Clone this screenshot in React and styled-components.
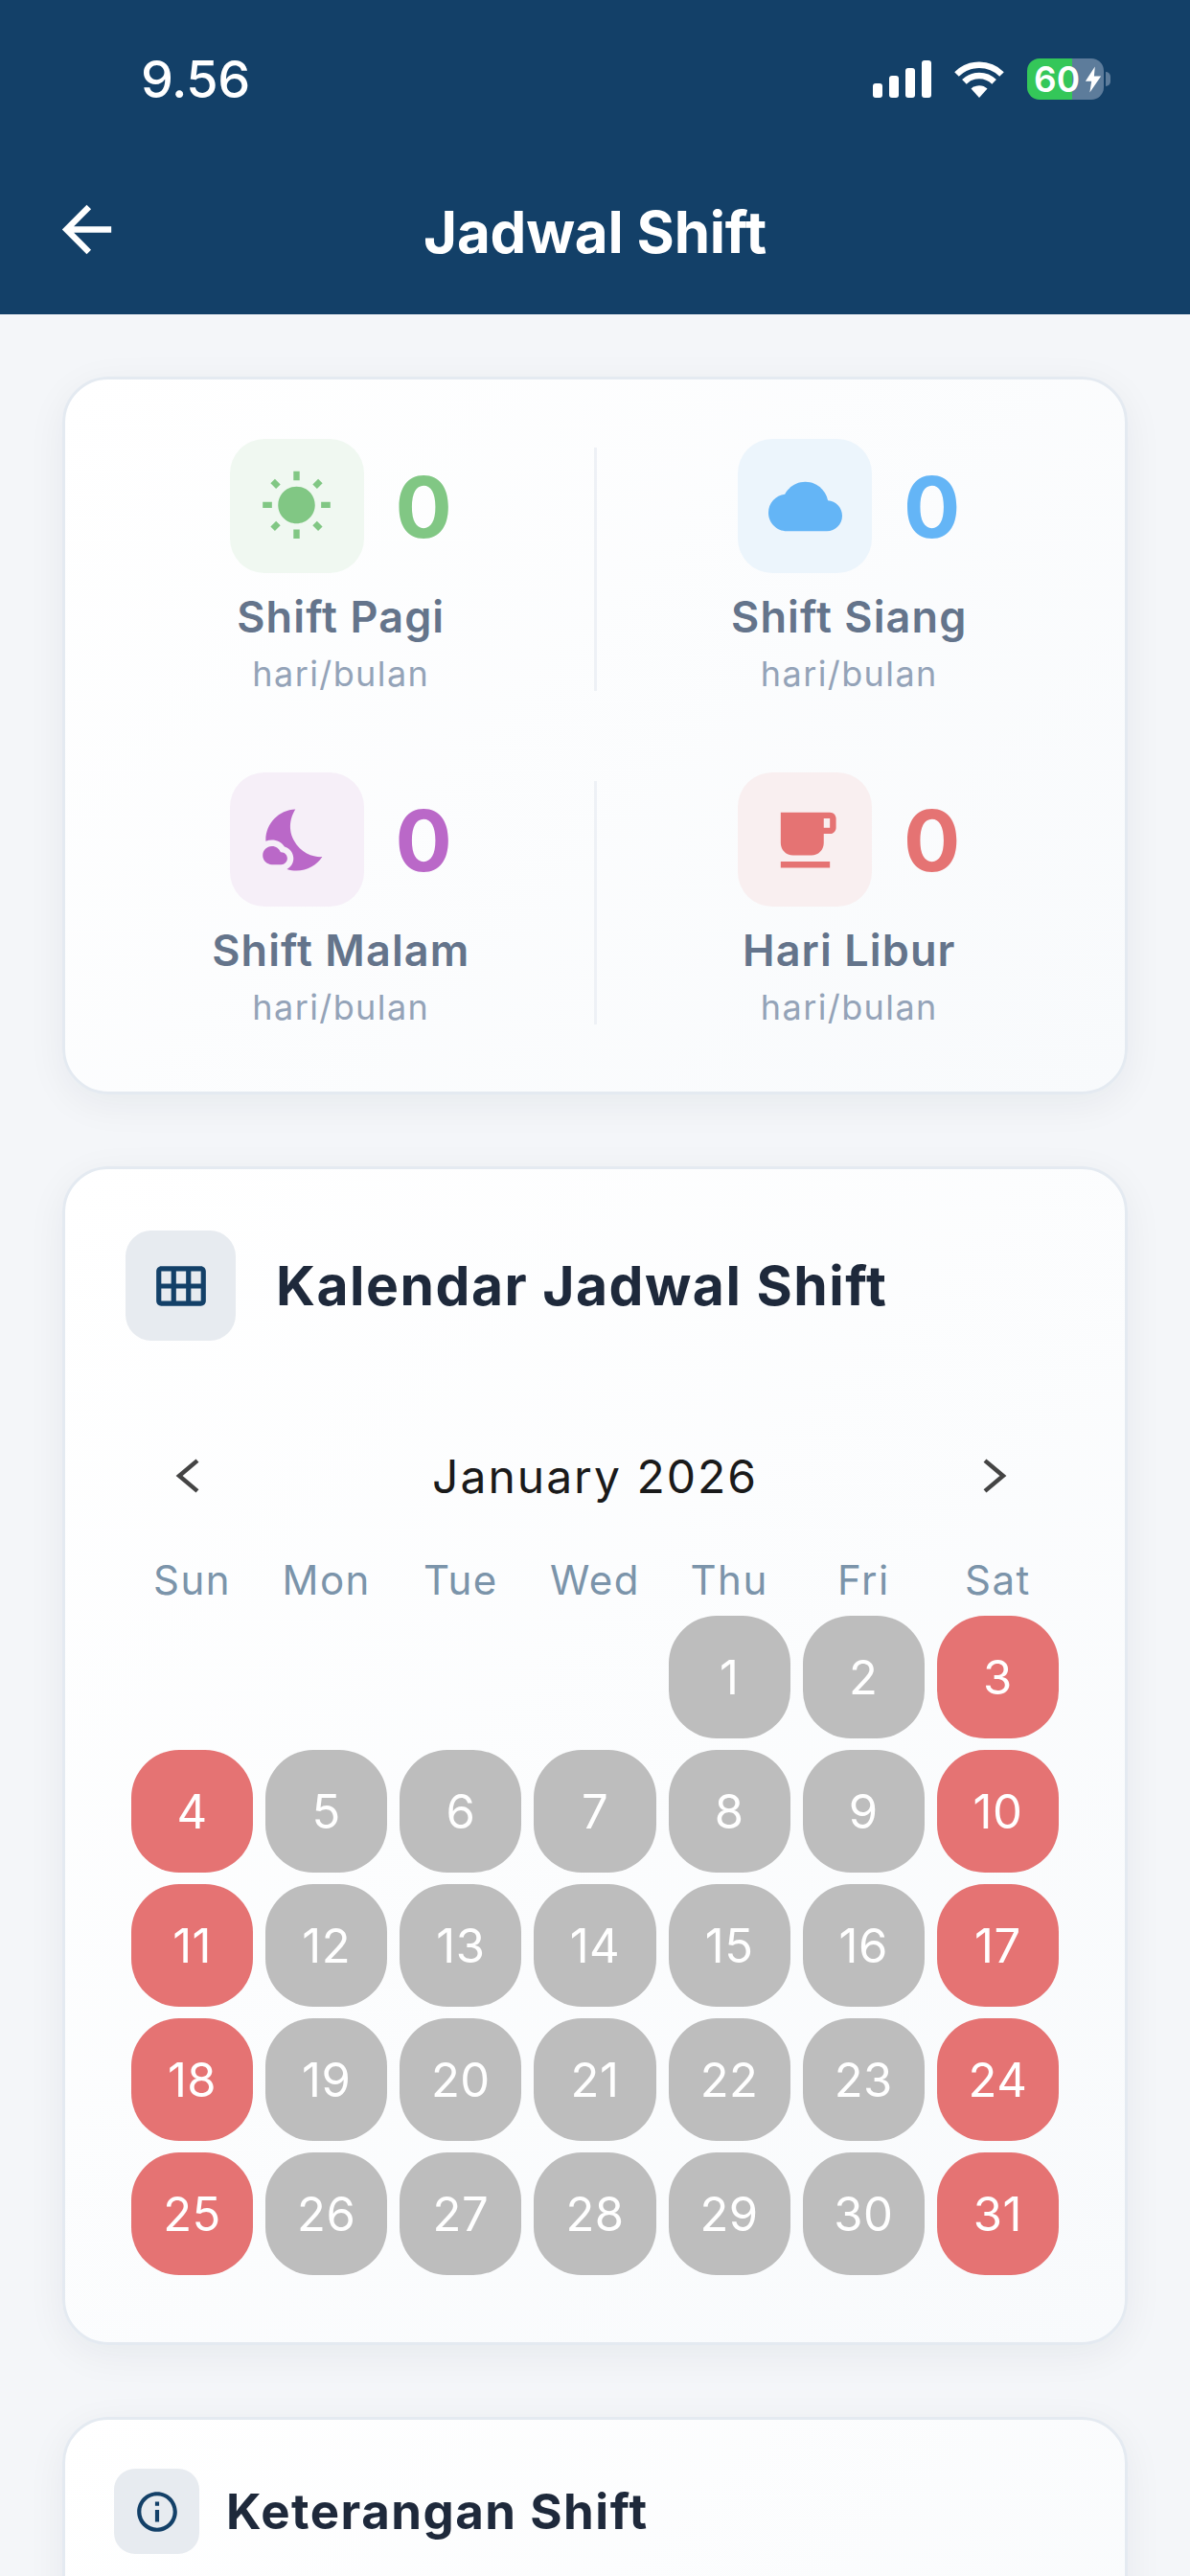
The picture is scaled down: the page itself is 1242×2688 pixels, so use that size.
import React from 'react';
import styled, { createGlobalStyle } from 'styled-components';

const GlobalStyle = createGlobalStyle`
  html, body {
    margin: 0;
    padding: 0;
    background: #f4f6f9;
    font-family: 'Inter', 'Liberation Sans', sans-serif;
  }
  * { box-sizing: border-box; }
`;

const NAVY = '#134068';

const ICONS = {
  back: 'M20 11H7.83l5.59-5.59L12 4l-8 8 8 8 1.41-1.41L7.83 13H20v-2z',
  sun: 'M6.76 4.84l-1.8-1.79-1.41 1.41 1.79 1.79 1.42-1.41zM4 10.5H1v2h3v-2zm9-9.95h-2V3.5h2V.55zm7.45 3.91l-1.41-1.41-1.79 1.79 1.41 1.41 1.79-1.79zm-3.21 13.7l1.79 1.8 1.41-1.41-1.8-1.79-1.4 1.4zM20 10.5v2h3v-2h-3zm-8-5c-3.31 0-6 2.69-6 6s2.69 6 6 6 6-2.69 6-6-2.69-6-6-6zm-1 16.95h2V19.5h-2v2.95zm-7.45-3.91l1.41 1.41 1.79-1.8-1.41-1.41-1.79 1.8z',
  cloud: 'M19.35 10.04C18.67 6.59 15.64 4 12 4 9.11 4 6.6 5.64 5.35 8.04 2.34 8.36 0 10.91 0 14c0 3.31 2.69 6 6 6h13c2.76 0 5-2.24 5-5 0-2.64-2.05-4.78-4.65-4.96z',
  moon: 'M11.1 12.08c-2.33-4.51-.5-8.48.53-10.07C6.27 2.2 1.98 6.59 1.98 12c0 .14.02.28.02.42.62-.27 1.29-.42 2-.42 1.66 0 3.18.83 4.1 2.15 1.67.48 2.9 2.02 2.9 3.85 0 1.52-.87 2.83-2.12 3.51.98.32 2.03.5 3.11.5 3.5 0 6.58-1.8 8.37-4.52-2.36.23-6.98-.97-9.26-5.41zM7 16h-.18C6.4 14.84 5.3 14 4 14c-1.66 0-3 1.34-3 3s1.34 3 3 3h3c1.1 0 2-.9 2-2s-.9-2-2-2z',
  cup: 'M20 3H4v10c0 2.21 1.79 4 4 4h6c2.21 0 4-1.79 4-4v-3h2c1.11 0 2-.9 2-2V5c0-1.11-.89-2-2-2zm0 5h-2V5h2v3zM4 19h16v2H4z',
  calendar: 'M20 4H4c-1.1 0-2 .9-2 2v12c0 1.1.9 2 2 2h16c1.1 0 2-.9 2-2V6c0-1.1-.9-2-2-2zM8 11H4V6h4v5zm6 0h-4V6h4v5zm6 0h-4V6h4v5zM8 18H4v-5h4v5zm6 0h-4v-5h4v5zm6 0h-4v-5h4v5z',
  info: 'M11 7h2v2h-2zm0 4h2v6h-2zm1-9C6.48 2 2 6.48 2 12s4.48 10 10 10 10-4.48 10-10S17.52 2 12 2zm0 18c-4.41 0-8-3.59-8-8s3.59-8 8-8 8 3.59 8 8-3.59 8-8 8z',
};

const Icon = ({ name, size, color }) => (
  <svg width={size} height={size} viewBox="0 0 24 24" fill={color} style={{ display: 'block' }}>
    <path d={ICONS[name]} />
  </svg>
);

const Chevron = ({ points }) => (
  <svg width="72" height="72" viewBox="0 0 24 24" fill="none" stroke="#444" strokeWidth="1.5">
    <polyline points={points} />
  </svg>
);

const STATS = [
  { icon: 'sun', label: 'Shift Pagi', color: '#81c784', tint: '#f0f8f1' },
  { icon: 'cloud', label: 'Shift Siang', color: '#64b5f6', tint: '#ecf5fc' },
  { icon: 'moon', label: 'Shift Malam', color: '#ba68c8', tint: '#f6eff8' },
  { icon: 'cup', label: 'Hari Libur', color: '#e57373', tint: '#f9eff0' },
];

const WEEKDAYS = ['Sun', 'Mon', 'Tue', 'Wed', 'Thu', 'Fri', 'Sat'];
const FIRST_WEEKDAY = 4;
const DAYS = Array.from({ length: 31 }, (_, i) => i + 1);

const isWeekend = (day) => {
  const column = (FIRST_WEEKDAY + day - 1) % 7;
  return column === 0 || column === 6;
};

const App = () => {
  return (
    <Page>
      <GlobalStyle />
      <Header>
        <StatusBar>
          <Clock>9.56</Clock>
          <StatusIcons>
            <Signal>
              <SignalBar $height={15} />
              <SignalBar $height={23} />
              <SignalBar $height={31} />
              <SignalBar $height={39} />
            </Signal>
            <svg width="54" height="39" viewBox="0 0 54 39" fill="none" stroke="#fff" strokeWidth="6.5">
              <path d="M3.5 14.5A33.5 33.5 0 0 1 50.5 14.5" />
              <path d="M11.4 22.4A22 22 0 0 1 42.6 22.4" />
              <path d="M27 39L18.5 29.5A12.5 12.5 0 0 1 35.5 29.5Z" fill="#fff" stroke="none" />
            </svg>
            <Battery>
              60
              <svg width="18" height="28" viewBox="0 0 20 30" fill="#fff">
                <path d="M12 0L1 17h7l-2 13L19 11h-8z" />
              </svg>
            </Battery>
          </StatusIcons>
        </StatusBar>
        <TitleBar>
          <BackButton>
            <Icon name="back" size={77} color="#fff" />
          </BackButton>
          <PageTitle>Jadwal Shift</PageTitle>
        </TitleBar>
      </Header>

      <Content>
        <StatsCard>
          {STATS.map((stat, index) => (
            <React.Fragment key={stat.label}>
              {index % 2 === 1 && <Divider />}
              <StatItem>
                <StatTop>
                  <StatTile $tint={stat.tint}>
                    <Icon name={stat.icon} size={77} color={stat.color} />
                  </StatTile>
                  <StatValue $color={stat.color}>0</StatValue>
                </StatTop>
                <StatLabel>{stat.label}</StatLabel>
                <StatUnit>hari/bulan</StatUnit>
              </StatItem>
            </React.Fragment>
          ))}
        </StatsCard>

        <CalendarCard>
          <SectionHeader $gap={42}>
            <SectionTile $size={115} $radius={27}>
              <Icon name="calendar" size={62} color={NAVY} />
            </SectionTile>
            <SectionTitle $size={57}>Kalendar Jadwal Shift</SectionTitle>
          </SectionHeader>

          <MonthRow>
            <Chevron points="15,6.7 8.7,12 15,17.3" />
            <MonthName>January 2026</MonthName>
            <Chevron points="9,6.7 15.3,12 9,17.3" />
          </MonthRow>

          <DayGrid>
            {WEEKDAYS.map((name) => (
              <Weekday key={name}>{name}</Weekday>
            ))}
            {WEEKDAYS.slice(0, FIRST_WEEKDAY).map((name) => (
              <span key={name} />
            ))}
            {DAYS.map((day) => (
              <DayCell key={day} $off={isWeekend(day)}>{day}</DayCell>
            ))}
          </DayGrid>
        </CalendarCard>

        <LegendCard>
          <SectionHeader $gap={28}>
            <SectionTile $size={89} $radius={22}>
              <Icon name="info" size={50} color={NAVY} />
            </SectionTile>
            <SectionTitle $size={51}>Keterangan Shift</SectionTitle>
          </SectionHeader>
        </LegendCard>
      </Content>
    </Page>
  );
};

const Page = styled.div`
  width: 1242px;
  height: 2688px;
  overflow: hidden;
  background: #f4f6f9;
`;

const Header = styled.header`
  height: 328px;
  background: ${NAVY};
  color: #fff;
`;

const StatusBar = styled.div`
  height: 164px;
  padding: 61px 90px 0 147px;
  display: flex;
  justify-content: space-between;
  align-items: flex-start;
`;

const Clock = styled.div`
  font-size: 54px;
  font-weight: 500;
  line-height: 44px;
  letter-spacing: -0.5px;
`;

const StatusIcons = styled.div`
  display: flex;
  align-items: center;
  gap: 23px;
  height: 43px;
`;

const Signal = styled.div`
  display: flex;
  align-items: flex-end;
  gap: 7px;
`;

const SignalBar = styled.span`
  width: 10px;
  height: ${(p) => p.$height}px;
  background: #fff;
  border-radius: 3px;
`;

const Battery = styled.div`
  position: relative;
  width: 80px;
  height: 43px;
  border-radius: 13px;
  background: linear-gradient(to right, #34c759 59%, #5d7c9b 59%);
  display: flex;
  align-items: center;
  padding-left: 7px;
  gap: 5px;
  font-size: 37px;
  font-weight: 600;
  color: #fff;

  &::after {
    content: '';
    position: absolute;
    right: -7px;
    top: 14px;
    width: 5px;
    height: 15px;
    border-radius: 0 5px 5px 0;
    background: #5d7c9b;
  }
`;

const TitleBar = styled.div`
  position: relative;
  height: 150px;
  display: flex;
  justify-content: center;
  align-items: flex-start;
`;

const BackButton = styled.div`
  position: absolute;
  left: 52px;
  top: 37px;
`;

const PageTitle = styled.h1`
  margin: 43px 0 0;
  font-size: 60px;
  line-height: 70px;
  font-weight: 700;
  letter-spacing: -0.2px;
`;

const Content = styled.main`
  padding: 65px 65px 0;
  display: flex;
  flex-direction: column;
  gap: 75px;
`;

const Card = styled.section`
  flex: none;
  border: 3px solid #e4eaf1;
  border-radius: 48px;
  background: linear-gradient(135deg, #ffffff, #f8fafc);
  box-shadow: 0 10px 40px rgba(20, 30, 50, 0.06);
`;

const StatsCard = styled(Card)`
  height: 749px;
  padding: 62px 24px 0;
  display: grid;
  grid-template-columns: 1fr 3px 1fr;
  grid-auto-rows: 263px;
  row-gap: 85px;
`;

const Divider = styled.div`
  margin-top: 9px;
  height: 254px;
  background: #eef1f6;
`;

const StatItem = styled.div`
  display: flex;
  flex-direction: column;
  align-items: center;
`;

const StatTop = styled.div`
  display: flex;
  align-items: center;
  gap: 33px;
`;

const StatTile = styled.div`
  width: 140px;
  height: 140px;
  border-radius: 36px;
  background: ${(p) => p.$tint};
  display: flex;
  align-items: center;
  justify-content: center;
`;

const StatValue = styled.div`
  font-size: 88px;
  line-height: 100px;
  font-weight: 700;
  margin-top: 2px;
  color: ${(p) => p.$color};
`;

const StatLabel = styled.div`
  margin-top: 16px;
  font-size: 45px;
  line-height: 60px;
  font-weight: 600;
  letter-spacing: 1.1px;
  color: #64748b;
`;

const StatUnit = styled.div`
  margin-top: 5px;
  font-size: 36px;
  line-height: 48px;
  letter-spacing: 1.4px;
  color: #94a3b8;
`;

const CalendarCard = styled(Card)`
  height: 1230px;
  padding: 64px 63px 0;
`;

const LegendCard = styled(Card)`
  height: 600px;
  padding: 51px 51px 0;
`;

const SectionHeader = styled.div`
  display: flex;
  align-items: center;
  gap: ${(p) => p.$gap}px;
`;

const SectionTile = styled.div`
  width: ${(p) => p.$size}px;
  height: ${(p) => p.$size}px;
  border-radius: ${(p) => p.$radius}px;
  background: #e7ebf0;
  display: flex;
  align-items: center;
  justify-content: center;
`;

const SectionTitle = styled.h2`
  margin: 0;
  font-size: ${(p) => p.$size}px;
  font-weight: 700;
  letter-spacing: 1.5px;
  color: #1e293b;
`;

const MonthRow = styled.div`
  margin: 105px 0 0 30px;
  width: 912px;
  height: 72px;
  display: flex;
  align-items: center;
  justify-content: space-between;
`;

const MonthName = styled.div`
  margin-left: 8px;
  font-size: 48px;
  letter-spacing: 2px;
  color: #1a1a1a;
`;

const DayGrid = styled.div`
  margin: 44px 0 0 6px;
  width: 968px;
  display: grid;
  grid-template-columns: repeat(7, 1fr);
  column-gap: 13px;
  row-gap: 12px;
`;

const Weekday = styled.div`
  height: 56px;
  margin-bottom: -2px;
  text-align: center;
  font-size: 42px;
  line-height: 58px;
  letter-spacing: 1.5px;
  color: #7b94aa;
`;

const DayCell = styled.div`
  height: 128px;
  border-radius: 50px;
  background: ${(p) => (p.$off ? '#e57373' : '#bdbdbd')};
  color: #fff;
  font-size: 49px;
  font-weight: 400;
  letter-spacing: 0.5px;
  display: flex;
  align-items: center;
  justify-content: center;
`;

export default App;
